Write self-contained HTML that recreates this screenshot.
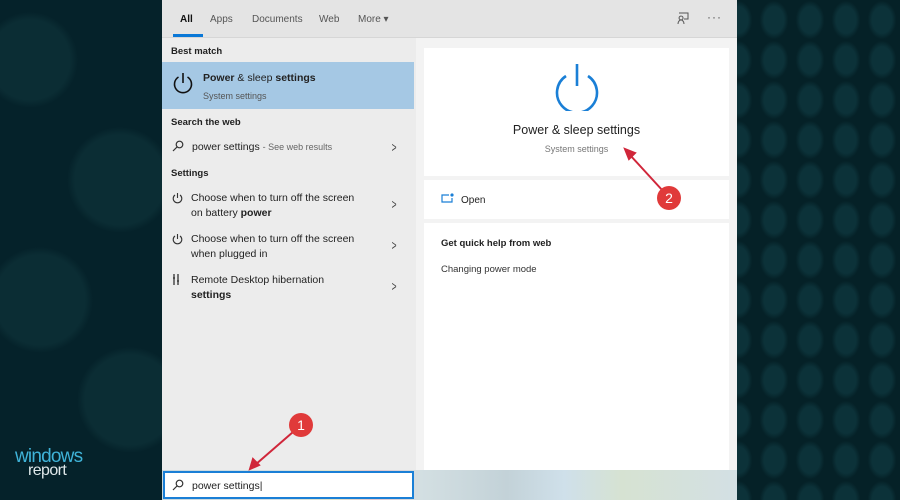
<!DOCTYPE html>
<html><head><style>
*{margin:0;padding:0;box-sizing:border-box}
body{width:900px;height:500px;overflow:hidden;position:relative;font-family:"Liberation Sans",sans-serif;
background-color:#052127;
background-image:radial-gradient(ellipse 18px 24px at 50% 50%,#0c3239 55%,transparent 80%);
background-size:36px 40px;}
.bgl{position:absolute;left:0;top:0;width:162px;height:500px;background:radial-gradient(circle at 30px 60px,#0b2d34 40px,transparent 48px),radial-gradient(circle at 120px 180px,#0b2d34 45px,transparent 53px),radial-gradient(circle at 40px 300px,#0b2d34 45px,transparent 53px),radial-gradient(circle at 130px 400px,#0b2d34 45px,transparent 53px),#05222a}
.panel{position:absolute;left:162px;top:0;width:575px;height:500px;background:#ececec}
.top{position:absolute;left:0;top:0;width:575px;height:38px;background:#e4e4e4;border-bottom:1px solid #d6d6d6;font-size:10px;color:#555}
.top span{position:absolute;top:14px}
.abs{position:absolute}
.t{font-size:10px;color:#222}
.h{font-size:9.5px;font-weight:bold;color:#222}
.chev{position:absolute;left:228px;font-size:14px;color:#444;transform:scaleX(.6)}
.right{position:absolute;left:254px;top:38px;width:321px;height:432px;background:#f3f3f3}
.card{position:absolute;left:8px;width:305px;background:#fff}
</style></head><body>
<div class="bgl"></div>
<div class="abs" style="left:15px;top:446px;color:#3fb3d8;font-size:19px;letter-spacing:-.8px">windows</div>
<div class="abs" style="left:28px;top:462px;color:#dfe8ea;font-size:16px;letter-spacing:-.6px">report</div>
<div class="panel">
 <div class="top">
  <span style="left:18px;color:#111;font-weight:bold">All</span>
  <div class="abs" style="left:11px;top:34px;width:30px;height:3px;background:#0a78d7"></div>
  <span style="left:48px">Apps</span><span style="left:90px">Documents</span><span style="left:157px">Web</span><span style="left:196px">More ▾</span>
  <svg class="abs" style="left:514px;top:11px" width="14" height="14" viewBox="0 0 14 14" fill="none" stroke="#555" stroke-width="1"><path d="M3 2h9v6H8M5 5a2 2 0 1 0 0.1 0M2 13c0-3 2-4 3-4s3 1 3 4"/></svg>
  <span style="left:545px;top:10px;font-size:12px;letter-spacing:1px">···</span>
 </div>
 <div class="abs h" style="left:9px;top:46px">Best match</div>
 <div class="abs" style="left:0;top:62px;width:252px;height:47px;background:#a5c8e4"></div>
 <svg class="abs" style="left:10px;top:71px" width="22" height="24" viewBox="0 0 22 24" fill="none" stroke="#111" stroke-width="1.6"><path d="M6.5 6A8.5 8.5 0 1 0 15.5 6M11 2v10"/></svg>
 <div class="abs t" style="left:41px;top:72px;font-size:10.5px"><b>Power</b> &amp; sleep <b>settings</b></div>
 <div class="abs" style="left:41px;top:91px;font-size:9px;color:#555">System settings</div>
 <div class="abs h" style="left:9px;top:117px">Search the web</div>
 <svg class="abs" style="left:10px;top:140px" width="12" height="12" viewBox="0 0 12 12" fill="none" stroke="#333" stroke-width="1.2"><circle cx="7.5" cy="4.5" r="3.3"/><path d="M5 7L1 11"/></svg>
 <div class="abs t" style="left:30px;top:141px;font-size:10.5px">power settings <span style="font-size:9px;color:#666">- See web results</span></div>
 <div class="chev" style="top:139px">&gt;</div>
 <div class="abs h" style="left:9px;top:168px">Settings</div>
 <svg class="abs" style="left:10px;top:192px" width="11" height="12" viewBox="0 0 11 12" fill="none" stroke="#333" stroke-width="1.1"><path d="M3 3A4.3 4.3 0 1 0 8 3M5.5 1v5"/></svg>
 <div class="abs t" style="left:29px;top:191px;line-height:15px;font-size:10.5px">Choose when to turn off the screen<br>on battery <b>power</b></div>
 <div class="chev" style="top:196px">&gt;</div>
 <svg class="abs" style="left:10px;top:233px" width="11" height="12" viewBox="0 0 11 12" fill="none" stroke="#333" stroke-width="1.1"><path d="M3 3A4.3 4.3 0 1 0 8 3M5.5 1v5"/></svg>
 <div class="abs t" style="left:29px;top:232px;line-height:15px;font-size:10.5px">Choose when to turn off the screen<br>when plugged in</div>
 <div class="chev" style="top:237px">&gt;</div>
 <svg class="abs" style="left:10px;top:273px" width="9" height="13" viewBox="0 0 9 13" fill="none" stroke="#333" stroke-width="1.3"><path d="M2 1v11M6 1v11M1 5h2M5 8h2"/></svg>
 <div class="abs t" style="left:29px;top:273px;line-height:15px;font-size:10.5px">Remote Desktop hibernation<br><b>settings</b></div>
 <div class="chev" style="top:278px">&gt;</div>
 <div class="right">
  <div class="card" style="top:10px;height:128px">
   <svg class="abs" style="left:130px;top:13px" width="46" height="50" viewBox="0 0 46 50" fill="none" stroke="#1a7fd6" stroke-width="2.6"><path d="M12 15A20 20 0 1 0 34 15M23 3v22"/></svg>
   <div class="abs" style="left:0;width:305px;text-align:center;top:75px;font-size:12.5px;color:#222">Power &amp; sleep settings</div>
   <div class="abs" style="left:0;width:305px;text-align:center;top:96px;font-size:9px;color:#777">System settings</div>
  </div>
  <div class="card" style="top:142px;height:39px">
   <svg class="abs" style="left:17px;top:13px" width="13" height="10" viewBox="0 0 13 10" fill="none" stroke="#1a7fd6" stroke-width="1.2"><path d="M8 2H1v7h10V5"/><circle cx="11" cy="2" r="1" fill="#1a7fd6"/></svg>
   <div class="abs t" style="left:37px;top:15px;font-size:10px">Open</div>
  </div>
  <div class="card" style="top:185px;height:247px">
   <div class="abs h" style="left:17px;top:15px">Get quick help from web</div>
   <div class="abs t" style="left:17px;top:41px;font-size:9.5px;color:#333">Changing power mode</div>
  </div>
 </div>
 <div class="abs" style="left:0;top:470px;width:575px;height:30px;background:linear-gradient(90deg,#c9d8de,#d3dfe2 20%,#e2e2c8 30%,#e3c7cc 37%,#d3dfe2 45%,#c3d2d8 60%,#cfe0ea 70%,#d6e2d2 80%,#d3e0e4)"></div>
 <div class="abs" style="left:1px;top:471px;width:251px;height:28px;background:#fff;border:2px solid #1a7fd6"></div>
 <svg class="abs" style="left:10px;top:479px" width="12" height="12" viewBox="0 0 12 12" fill="none" stroke="#333" stroke-width="1.2"><circle cx="7.5" cy="4.5" r="3.3"/><path d="M5 7L1 11"/></svg>
 <div class="abs t" style="left:30px;top:480px;font-size:10.5px">power settings|</div>
</div>
<svg class="abs" style="left:0;top:0" width="900" height="500">
 <g stroke="#d0263a" stroke-width="2" fill="#d0263a">
  <path d="M293 432L255 465" fill="none"/><path d="M250 469l3-10 6 6z"/>
  <path d="M663 191L630 155" fill="none"/><path d="M625 149l10 4-6 6z"/>
 </g>
 <circle cx="301" cy="425" r="12" fill="#e03a3a"/><text x="301" y="430" fill="#fff" font-size="14" text-anchor="middle" font-family="Liberation Sans">1</text>
 <circle cx="669" cy="198" r="12" fill="#e03a3a"/><text x="669" y="203" fill="#fff" font-size="14" text-anchor="middle" font-family="Liberation Sans">2</text>
</svg>
</body></html>
